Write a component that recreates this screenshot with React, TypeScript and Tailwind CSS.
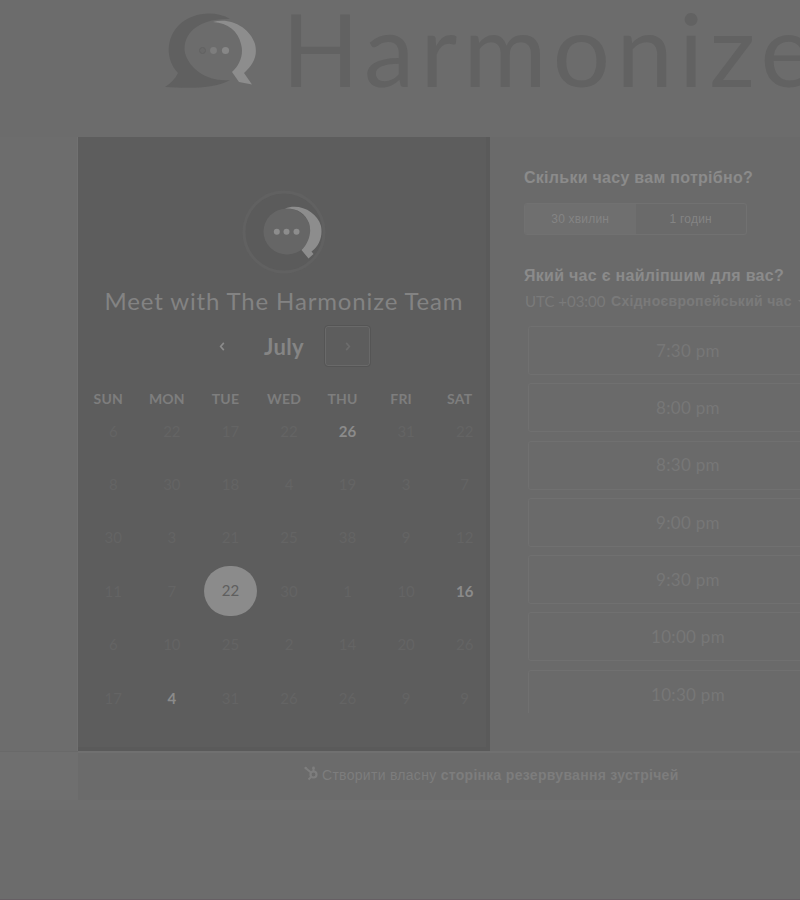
import React from 'react';

type DayState = 'muted' | 'open' | 'selected';

const WEEKDAYS = ['SUN', 'MON', 'TUE', 'WED', 'THU', 'FRI', 'SAT'];

const WEEKS: string[][] = [
  ['6', '22', '17', '22', '26', '31', '22'],
  ['8', '30', '18', '4', '19', '3', '7'],
  ['30', '3', '21', '25', '38', '9', '12'],
  ['11', '7', '22', '30', '1', '10', '16'],
  ['6', '10', '25', '2', '14', '20', '26'],
  ['17', '4', '31', '26', '26', '9', '9'],
];

const STATES: Record<string, DayState> = {
  '0-4': 'open',
  '3-2': 'selected',
  '3-6': 'open',
  '5-1': 'open',
};

const SLOTS = ['7:30 pm', '8:00 pm', '8:30 pm', '9:00 pm', '9:30 pm', '10:00 pm', '10:30 pm'];

function HeaderLogo() {
  return (
    <svg className="block h-[80px] w-[96px] shrink-0" viewBox="162 10 96 80">
      <path
        d="M230 19C216 10 192 12 179 25C166 38 165 59 178 73C175 79 171 83 165 87C184 88 212 90 230 80C208 82 190 70 185 53C182 34 198 18 230 19Z"
        fill="#606060"
      />
      <path
        d="M213 22C231 17 250 28 255 44C258 56 253 65 244 73L252 84.500L239 82L232 72C240 65 244 54 241 44C238 31 228 23 213 22Z"
        fill="#8d8d8d"
      />
      <circle cx="202.500" cy="50.500" r="3" fill="#696969" stroke="#626262" />
      <circle cx="213.500" cy="50.500" r="3.400" fill="#7d7d7d" />
      <circle cx="225.500" cy="50.500" r="3.600" fill="#878787" />
    </svg>
  );
}

function Avatar() {
  return (
    <svg className="block h-[86px] w-[86px]" viewBox="241 189 86 86">
      <circle cx="284" cy="232" r="40" fill="#5b5b5b" stroke="#616161" strokeWidth="3" />
      <ellipse cx="287" cy="231.500" rx="23.500" ry="23" fill="#666" />
      <path
        d="M285 208.500C300 203 317 212 321 226C323 237 319 246 311.500 251.500L313.500 254L308.500 258.500L301.500 250C309 243 312 232 309 223C305 213 297 208 285 208.500Z"
        fill="#8d8d8d"
      />
      <circle cx="276.800" cy="231.700" r="3" fill="#8d8d8d" />
      <circle cx="286.500" cy="231.700" r="3" fill="#8d8d8d" />
      <circle cx="296.500" cy="231.700" r="3" fill="#8d8d8d" />
    </svg>
  );
}

function Chevron({ back = false, className }: { back?: boolean; className: string }) {
  return (
    <svg className={className} viewBox="0 0 6 10" fill="none" stroke="currentColor" strokeWidth="1.800">
      <path d={back ? 'M5 1L1.500 5L5 9' : 'M1 1L4.500 5L1 9'} />
    </svg>
  );
}

function Sprocket() {
  return (
    <svg className="h-[15px] w-[15px] shrink-0" viewBox="0 0 15 15" fill="none" stroke="#7e7e7e">
      <circle cx="9.500" cy="8.500" r="3" strokeWidth="2.200" />
      <path d="M7 6.500L1.500 2M9.500 5.500V2M7.500 10.500L4.500 13.500" strokeWidth="2" />
      <circle cx="1.700" cy="2" r="1.300" fill="#7e7e7e" stroke="none" />
      <circle cx="9.500" cy="2" r="1.400" fill="#7e7e7e" stroke="none" />
    </svg>
  );
}

function Day({ label, state }: { label: string; state: DayState }) {
  if (state === 'selected') {
    return (
      <span className="flex h-[50px] w-[53px] items-center justify-center rounded-full bg-[#8b8b8b] pb-0.5 text-[#5f5f5f]">
        {label}
      </span>
    );
  }
  return <span className={state === 'open' ? 'font-bold text-[#8b8b8b]' : 'text-[#646464]'}>{label}</span>;
}

function CalendarPanel() {
  return (
    <section className="flex h-[614px] w-[412px] shrink-0 flex-col items-center bg-[#5d5d5d] pt-[52px] font-['Lato','Noto_Sans',sans-serif] shadow-[inset_-4px_-4px_0_#5a5a5a]">
      <Avatar />
      <h2 className="mt-[10px] h-8 text-[24px] leading-8 tracking-[0.850px] whitespace-nowrap text-[#838383]">
        Meet with The Harmonize Team
      </h2>
      <div className="mt-[9px] flex h-[40px] w-full items-center">
        <span className="flex w-[147px] justify-end text-[#8b8b8b]">
          <Chevron back className="h-[9px] w-[6px]" />
        </span>
        <span className="w-[118px] text-center text-[22px] font-bold tracking-[0.300px] text-[#858585]">July</span>
        <span className="-ml-[18px] flex h-[40px] w-[45px] items-center justify-center rounded-[3px] border border-[#696969] text-[#6c6c6c] outline outline-[#555]">
          <Chevron className="h-[9px] w-[6px]" />
        </span>
      </div>
      <div className="mt-[23px] ml-px grid w-[410px] grid-cols-7 self-start text-center text-[14px] leading-5 font-bold tracking-[0.200px] text-[#7e7e7e]">
        {WEEKDAYS.map((d) => (
          <span key={d}>{d}</span>
        ))}
      </div>
      <div className="-mt-[5px] ml-[6px] flex w-[410px] flex-col self-start text-[15px] leading-5">
        {WEEKS.map((week, r) => (
          <div key={r} className="grid h-[53.400px] grid-cols-7">
            {week.map((label, c) => (
              <div key={c} className="flex items-center justify-center">
                <Day label={label} state={STATES[`${r}-${c}`] ?? 'muted'} />
              </div>
            ))}
          </div>
        ))}
      </div>
    </section>
  );
}

function BookingPanel() {
  return (
    <section className="h-[614px] w-[422px] shrink-0 bg-[#6a6a6a] pt-[30px] pl-[34px] font-['Liberation_Sans',sans-serif]">
      <h3 className="text-[16px] leading-[22px] font-bold tracking-[0.280px] text-[#8b8b8b]">
        Скільки часу вам потрібно?
      </h3>
      <div className="mt-[14px] flex h-[32px] w-[223px] overflow-hidden rounded-[3px] border border-[#717171] text-[12px] tracking-[0.200px] text-[#848484]">
        <span className="flex w-1/2 items-center justify-center bg-[#6f6f6f]">30 хвилин</span>
        <span className="flex w-1/2 items-center justify-center">1 годин</span>
      </div>
      <h3 className="mt-[30px] text-[16px] leading-[22px] font-bold tracking-[0.280px] text-[#8b8b8b]">
        Який час є найліпшим для вас?
      </h3>
      <div className="mt-[4px] flex h-[20px] items-center whitespace-nowrap text-[#7a7a7a]">
        <span className="w-[87px] pl-px font-['Lato',sans-serif] text-[15px]">UTC +03:00</span>
        <span className="text-[14px] font-bold tracking-[0.300px]">Східноєвропейський час</span>
        <span className="ml-[6px] border-x-3 border-t-3 border-x-transparent border-t-[#7a7a7a]" />
      </div>
      <div className="mt-[15px] ml-[4px] flex h-[387px] flex-col gap-[8.300px] overflow-hidden font-['Lato',sans-serif] text-[17px] text-[#777]">
        {SLOTS.map((t) => (
          <div
            key={t}
            className="flex h-[49px] w-[320px] shrink-0 items-center justify-center rounded-[3px] border border-[#707070] tracking-[0.300px]"
          >
            {t}
          </div>
        ))}
      </div>
    </section>
  );
}

export default function App() {
  return (
    <div className="flex h-[900px] w-[800px] flex-col overflow-hidden bg-[#6c6c6c]">
      <header className="flex h-[137px] shrink-0 items-start overflow-hidden pt-[10px] pl-[162px]">
        <HeaderLogo />
        <span className="-mt-[22px] ml-[24px] font-['Lato',sans-serif] text-[101px] leading-[120px] tracking-[6.300px] text-[#626262]">
          Harmonize
        </span>
      </header>
      <main className="flex shrink-0">
        <div className="w-[78px] shrink-0 border-r border-[#717171] bg-[#6d6d6d]" />
        <CalendarPanel />
        <BookingPanel />
      </main>
      <div className="flex h-[49px] shrink-0">
        <div className="w-[78px] shrink-0 border-t border-[#696969] bg-[#6f6f6f]" />
        <footer className="flex flex-1 items-start border-t-2 border-[#707070] bg-[#6b6b6b] pt-[13px] pl-[226px] font-['Liberation_Sans',sans-serif] text-[14px] leading-[18px] tracking-[0.290px] whitespace-nowrap text-[#7d7d7d]">
          <Sprocket />
          <span className="ml-[3px]">
            Створити власну <b>сторінка резервування зустрічей</b>
          </span>
        </footer>
      </div>
      <div className="h-[10px] shrink-0 bg-[#6e6e6e]" />
      <div className="flex-1 border-b border-[#665f64]" />
    </div>
  );
}
